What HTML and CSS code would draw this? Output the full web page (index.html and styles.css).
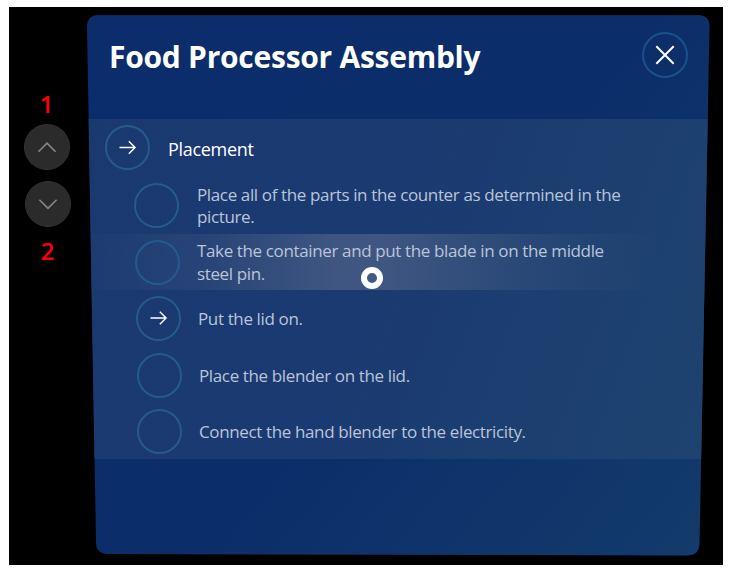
FILE: index.html
```html
<!DOCTYPE html>
<html lang="en">
<head>
<meta charset="utf-8">
<title>Food Processor Assembly</title>
<link rel="stylesheet" href="styles.css">
</head>
<body>
<main class="scene">
  <nav class="scroller">
    <span class="label">1</span>
    <button class="round scroll up" aria-label="Scroll up"><svg viewBox="0 0 46 46"><path d="M14 28 23 19 32 28"/></svg></button>
    <button class="round scroll down" aria-label="Scroll down"><svg viewBox="0 0 46 46"><path d="M14 18.5 23 27.5 32 18.5"/></svg></button>
    <span class="label second">2</span>
  </nav>
  <section class="panel">
    <header class="header">
      <h1 class="title"><span>Food Processor Assembly</span></h1>
      <button class="round close" aria-label="Close"><svg viewBox="0 0 46 46"><path d="M13.5 13.5 32.5 32.5M32.5 13.5 13.5 32.5"/></svg></button>
    </header>
    <ul class="steps">
      <li class="step group"><span class="round ring"><svg viewBox="0 0 46 46"><path d="M14 23H31.5M24.5 16 31.5 23 24.5 30"/></svg></span><p class="text">Placement</p></li>
      <li class="step s1"><span class="round ring"></span><p class="text">Place all of the parts in the counter as determined in the<br>picture.</p></li>
      <li class="step s2"><span class="round ring"></span><p class="text">Take the container and put the blade in on the middle<br>steel pin.</p><span class="cursor"></span></li>
      <li class="step s3"><span class="round ring"><svg viewBox="0 0 46 46"><path d="M14 22.5H31.5M24.5 15.5 31.5 22.5 24.5 29.5"/></svg></span><p class="text">Put the lid on.</p></li>
      <li class="step s4"><span class="round ring"></span><p class="text">Place the blender on the lid.</p></li>
      <li class="step s5"><span class="round ring"></span><p class="text">Connect the hand blender to the electricity.</p></li>
    </ul>
  </section>
</main>
</body>
</html>
```
FILE: styles.css
```css
* { box-sizing: border-box; }
body { margin: 0; background: #fff; font-family: "Open Sans", "Noto Sans", sans-serif; }
h1, p, ul { margin: 0; padding: 0; }
ul { list-style: none; }
svg { display: block; width: 100%; height: 100%; fill: none; stroke: currentColor; stroke-width: 1.6; }

.scene { display: flex; width: 714px; height: 558px; margin: 7px 0 0 9px; background: #000; }

.scroller { width: 78px; padding: 81px 0 0 15px; display: flex; flex-direction: column; }
.label { width: 45px; height: 36px; line-height: 32px; text-align: center; color: #f00; font-size: 24px; font-weight: 600; }
.round { flex: none; width: 46px; height: 46px; padding: 0; border: 1.5px solid #23588a; border-radius: 50%; background: none; color: #fff; }
.scroll { background: #2b2b2b; border-color: #333; color: #888; }
.down { margin: 11px 0 0 1px; }
.second { margin: 8px 0 0 1px; }

.panel {
  width: 623px; height: 542px; margin-top: 7px;
  background: linear-gradient(130deg, #0b2d6b 0%, #0b2d6a 50%, #133b6b 100%);
  clip-path: path("M0 13Q0 1 12 1L610 1Q623 1 622.5 13L612.5 530Q612 541.5 600 541.5L21 540Q9 540 9 528Z");
}
.header { display: flex; justify-content: space-between; height: 105px; padding: 16px 22px 0 22px; border-top: 2px solid #0d2751; }
.title { padding-top: 3px; color: #fff; font-size: 30px; font-weight: 700; letter-spacing: -0.26px; line-height: 44px; white-space: nowrap; }
.close { border: 2px solid #1a518a; }
.close svg { stroke-width: 2.2; }

.steps { height: 340px; background: linear-gradient(110deg, #1b3971 0%, #1b3a71 45%, #1d436f 100%); }
.step { position: relative; display: flex; align-items: center; height: 57px; padding-left: 47px; }
.ring { width: 45px; height: 45px; border: 2px solid #245b8c; }
.text { margin-left: 18px; color: #b9c5d8; font-size: 17px; letter-spacing: -0.37px; line-height: 22.5px; white-space: nowrap; }
.group { padding-left: 18px; }
.group .text { color: #fff; font-size: 18px; letter-spacing: -0.3px; padding-top: 3px; }
.s1 { height: 58px; }
.s1 .text { padding-top: 2px; }
.s2 { height: 56px; padding-left: 48px; background: linear-gradient(90deg, rgba(120, 132, 155, .02) 0%, rgba(120, 132, 155, .13) 18%, rgba(120, 132, 155, .38) 40%, rgba(120, 132, 155, .38) 48%, rgba(120, 132, 155, .15) 70%, transparent 92%); }
.s2 .text { margin-left: 17px; padding-top: 1px; }
.s3 { padding-left: 49px; height: 57px; }
.s4 { padding-left: 50px; height: 56px; }
.s5 { padding-left: 50px; height: 56px; }
.s3 .text, .s4 .text, .s5 .text { margin-left: 17px; padding-top: 2px; }
.cursor { position: absolute; left: 274px; top: 33px; width: 22px; height: 22px; border: 6px solid #fff; border-radius: 50%; background: #405a84; }
```
